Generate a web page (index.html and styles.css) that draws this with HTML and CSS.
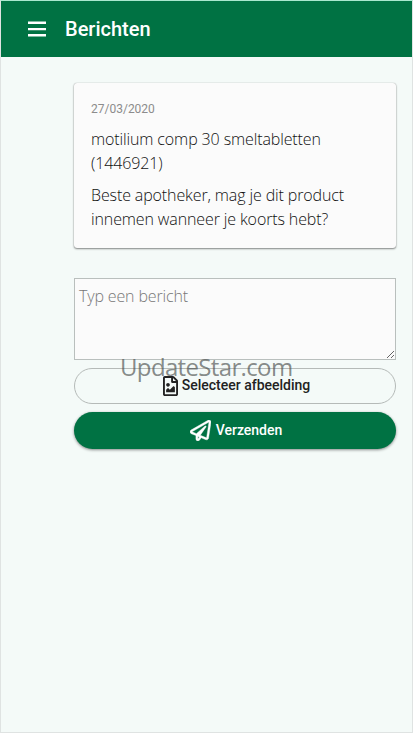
FILE: index.html
```html
<!DOCTYPE html>
<html lang="nl">
<head>
  <meta charset="UTF-8">
  <meta name="viewport" content="width=device-width, initial-scale=1">
  <title>Berichten</title>
  <link rel="stylesheet" href="styles.css">
</head>
<body>
  <div class="app">
    <header class="toolbar">
      <button class="menu-button" type="button" aria-label="Menu">
        <svg width="18" height="16" viewBox="0 0 18 16"><path fill="currentColor" d="M0 .5h18V3H0zM0 7h18v2.3H0zM0 13h18v2.4H0z"/></svg>
      </button>
      <h1>Berichten</h1>
    </header>

    <main class="content">
      <article class="card">
        <div class="date">27/03/2020</div>
        <p class="product">motilium comp 30 smeltabletten<br>(1446921)</p>
        <p class="question">Beste apotheker, mag je dit product<br>innemen wanneer je koorts hebt?</p>
      </article>

      <form class="message-form">
        <textarea class="message" placeholder="Typ een bericht"></textarea>
        <button class="button outline" type="button">
          <svg width="15" height="20" viewBox="0 0 384 512"><path fill="currentColor" d="M369.9 97.9L286 14C277 5 264.8-.1 252.1-.1H48C21.5 0 0 21.5 0 48v416c0 26.5 21.5 48 48 48h288c26.5 0 48-21.5 48-48V131.9c0-12.7-5.1-25-14.1-34zM332.1 128H256V51.9l76.1 76.1zM48 464V48h160v104c0 13.3 10.7 24 24 24h104v288H48zm32-48h224V288l-23.5-23.5c-4.7-4.7-12.3-4.7-17 0L176 352l-39.5-39.5c-4.7-4.7-12.3-4.7-17 0L80 352v64zm48-240c-26.5 0-48 21.5-48 48s21.5 48 48 48 48-21.5 48-48-21.5-48-48-48z"/></svg>
          <span>Selecteer afbeelding</span>
        </button>
        <button class="button primary" type="button">
          <svg width="21" height="21" viewBox="0 0 512 512"><path fill="currentColor" stroke="currentColor" stroke-width="10" d="M440 6.5L24 246.4c-34.4 19.9-31.1 70.8 5.7 85.9L144 379.6V464c0 46.4 59.2 65.5 86.6 28.6l43.8-59.1 111.9 46.2c5.9 2.4 12.1 3.6 18.3 3.6 8.2 0 16.3-2.1 23.6-6.2 12.8-7.2 21.6-20 23.9-34.5l59.4-387.2c6.1-40.1-36.9-68.8-71.5-48.9zM192 464v-64.6l36.6 15.1L192 464zm212.6-28.7l-153.8-63.5L391 169.5c10.7-15.5-9.5-33.5-23.7-21.2L155.8 332.6 48 288 464 48l-59.4 387.3z"/></svg>
          <span>Verzenden</span>
        </button>
        <div class="watermark">UpdateStar.com</div>
      </form>
    </main>
  </div>
</body>
</html>
```

FILE: styles.css
```css
* { box-sizing: border-box; }
body {
  margin: 0;
  font-family: "Open Sans", "Noto Sans", sans-serif;
  font-weight: 300;
  color: #111;
}
.app {
  height: 100vh;
  background: #f4faf8;
  border: 1px solid #dfe3e2;
  border-top-color: #a9e8cf;
  overflow: hidden;
}
.toolbar {
  height: 56px;
  display: flex;
  align-items: center;
  gap: 19px;
  padding-left: 27px;
  background: #007243;
  color: white;
}
.menu-button {
  display: flex;
  padding: 0;
  border: none;
  background: none;
  color: inherit;
}
h1 {
  margin: 0;
  font-family: Roboto, sans-serif;
  font-size: 20px;
  font-weight: 500;
}
.content {
  padding: 26px 16px 0 73px;
}
.card {
  height: 165px;
  padding: 16px 17px;
  background: #fbfbfb;
  border-radius: 3px;
  box-shadow: 0 1px 2px rgba(0, 0, 0, 0.45), 0 0 1px rgba(0, 0, 0, 0.35);
}
.card p {
  margin: 0 0 8px;
  font-size: 16px;
  line-height: 24px;
  letter-spacing: -0.12px;
  white-space: nowrap;
}
.date {
  margin-bottom: 8px;
  font-family: Roboto, sans-serif;
  font-size: 12px;
  font-weight: 400;
  line-height: 20px;
  color: #8c8c8c;
}
.message-form {
  position: relative;
  margin-top: 30px;
  display: flex;
  flex-direction: column;
  gap: 8px;
}
.message {
  height: 82px;
  padding: 5px 4px;
  background: #fbfbfb;
  border: 1px solid #b9bfbd;
  font: inherit;
  font-size: 16px;
  line-height: 24px;
  letter-spacing: -0.15px;
  outline: none;
}
.message::placeholder {
  color: #777;
}
.button {
  display: flex;
  align-items: center;
  justify-content: center;
  gap: 4px;
  height: 36px;
  border-radius: 19px;
  font-family: Roboto, sans-serif;
  font-size: 14px;
  font-weight: 500;
}
.button span {
  padding-bottom: 2px;
}
.outline {
  padding-left: 9px;
  background: none;
  border: 1px solid #b5bab8;
  color: #222;
}
.primary {
  gap: 5px;
  height: 37px;
  padding-left: 8px;
  background: #007243;
  border: none;
  color: white;
  box-shadow: 0 1px 3px rgba(0, 0, 0, 0.45);
}
.primary svg {
  margin-bottom: 1px;
}
.watermark {
  position: absolute;
  top: 73px;
  left: 46px;
  font-size: 24px;
  font-weight: 400;
  line-height: 32px;
  letter-spacing: -0.65px;
  color: rgba(70, 75, 73, 0.65);
  pointer-events: none;
}
```
